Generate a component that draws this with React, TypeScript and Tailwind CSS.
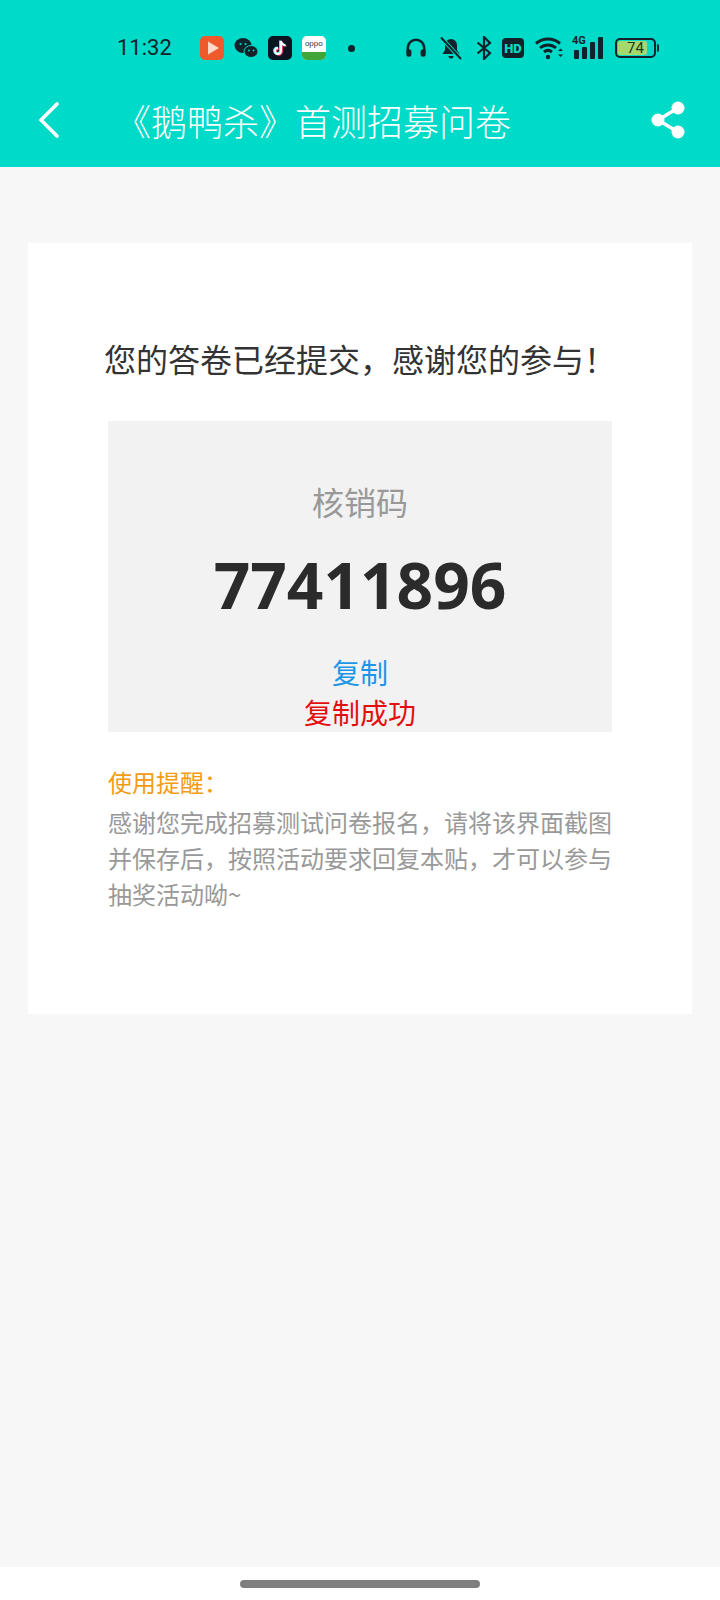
const cjk = "font-['Noto_Sans_CJK_SC','Noto_Sans',sans-serif]";

function AppIcons() {
  return (
    <div className="ml-[28px] flex items-center gap-[10px]">
      <svg width="24" height="24" viewBox="0 0 24 24">
        <rect width="24" height="24" rx="5" fill="#ef5a2c" />
        <path d="M8 5.500 19 12 8 18.500Z" fill="#ffd9c9" />
      </svg>
      <svg width="24" height="24" viewBox="0 0 24 24" fill="#10232b">
        <ellipse cx="9" cy="9.500" rx="8.500" ry="7.500" />
        <ellipse cx="17" cy="15.500" rx="7" ry="6" stroke="#00dac8" strokeWidth="1" />
        <circle cx="6.500" cy="8" r="1.100" fill="#00dac8" />
        <circle cx="11.500" cy="8" r="1.100" fill="#00dac8" />
        <circle cx="15" cy="14.500" r="0.900" fill="#00dac8" />
        <circle cx="19.500" cy="14.500" r="0.900" fill="#00dac8" />
      </svg>
      <svg width="24" height="24" viewBox="0 0 24 24">
        <rect width="24" height="24" rx="5" fill="#0b1420" />
        <path d="M13 5v10a3 3 0 1 1-3-3M13 5c.4 2.500 2 4 4.500 4.300" fill="none" stroke="#ee3f62" strokeWidth="2.400" transform="translate(.8 .6)" />
        <path d="M13 5v10a3 3 0 1 1-3-3M13 5c.4 2.500 2 4 4.500 4.300" fill="none" stroke="#4de8ee" strokeWidth="2.400" transform="translate(-.8 -.4)" />
        <path d="M13 5v10a3 3 0 1 1-3-3M13 5c.4 2.500 2 4 4.500 4.300" fill="none" stroke="#fff" strokeWidth="1.800" />
      </svg>
      <div className="flex h-[24px] w-[24px] flex-col overflow-hidden rounded-[5px] bg-white">
        <div className="flex flex-1 items-center justify-center">
          <span className="font-['Liberation_Sans',sans-serif] text-[8px] leading-none text-[#2a3a3a]">oppo</span>
        </div>
        <div className="h-[8px] bg-[#3fa53a]" />
      </div>
      <div className="ml-[12px] h-[7px] w-[7px] rounded-full bg-[#10232b]" />
    </div>
  );
}

function StatusIcons() {
  return (
    <div className="flex items-center">
      <svg width="22" height="24" viewBox="0 0 24 24" fill="none" stroke="#10232b" strokeWidth="2.800">
        <path d="M3 17v-5a9 9 0 0 1 18 0v5" />
        <rect x="2" y="14" width="4.500" height="7" rx="1.500" fill="#10232b" strokeWidth="1" />
        <rect x="17.500" y="14" width="4.500" height="7" rx="1.500" fill="#10232b" strokeWidth="1" />
      </svg>
      <svg className="ml-[12px]" width="24" height="24" viewBox="0 0 24 24">
        <path d="M12 3a6 6 0 0 1 6 6v5l2.500 4h-17L6 14V9a6 6 0 0 1 6-6ZM9.500 20h5a2.500 2.500 0 0 1-5 0Z" fill="#10232b" />
        <path d="M2 1.500 22 23" stroke="#00dac8" strokeWidth="4" />
        <path d="M2 1.500 22 23" stroke="#10232b" strokeWidth="2" />
      </svg>
      <svg className="ml-[13px]" width="16" height="24" viewBox="0 0 16 24" fill="none" stroke="#10232b" strokeWidth="2.200">
        <path d="M1.500 6.500 14 17l-6 6V1l6 6L1.500 17.500" />
      </svg>
      <div className="ml-[10px] flex h-[20px] w-[22px] items-center justify-center rounded-[4px] bg-[#10232b] font-['Roboto',sans-serif] text-[13px] leading-none font-black text-[#00dac8]">
        HD
      </div>
      <svg className="ml-[11px]" width="30" height="24" viewBox="0 0 30 24" fill="none" stroke="#10232b" strokeWidth="3">
        <path d="M1 7.500c7-6 17-6 24 0" />
        <path d="M5 12c4.500-4 11.500-4 16 0" />
        <path d="M9 16c2.500-2 5.500-2 8 0" />
        <circle cx="13" cy="21" r="2.200" fill="#10232b" stroke="none" />
        <path d="m23 15 2.500-2.500L28 15ZM23 18.500l2.500 2.500 2.500-2.500Z" fill="#10232b" stroke="none" />
      </svg>
      <div className="relative ml-[7px] h-[24px] w-[32px]">
        <span className="absolute top-[-1px] left-0 font-['Roboto',sans-serif] text-[11px] leading-none font-bold text-[#10232b]">4G</span>
        <svg className="absolute inset-0" width="32" height="24" viewBox="0 0 32 24" fill="#10232b">
          <rect x="2" y="14" width="5" height="9" rx="1" />
          <rect x="10" y="11" width="5" height="12" rx="1" />
          <rect x="18" y="6" width="5" height="17" rx="1" />
          <rect x="26" y="1" width="5" height="22" rx="1" />
        </svg>
      </div>
      <div className="ml-[11px] flex items-center">
        <div className="relative flex h-[20px] w-[41px] items-center overflow-hidden rounded-[5px] border-2 border-[#10232b] p-[1px]">
          <div className="h-full w-[29px] rounded-[2px] bg-[#a5d86f]" />
          <span className="absolute inset-0 flex items-center justify-center font-['Roboto',sans-serif] text-[15px] leading-none text-[#1d3a20]">74</span>
        </div>
        <div className="ml-[1px] h-[8px] w-[2px] rounded-r bg-[#10232b]" />
      </div>
    </div>
  );
}

export default function App() {
  return (
    <div className={`flex h-[1600px] w-[720px] flex-col overflow-hidden bg-[#f7f7f7] ${cjk}`}>
      <header className="h-[167px] shrink-0 bg-[#00dac8]">
        <div className="flex h-[62px] items-end pr-[61px] pl-[117px]">
          <span className="font-['Roboto',sans-serif] text-[22px] leading-[28px] text-[#10232b]">11:32</span>
          <div className="mb-[2px]">
            <AppIcons />
          </div>
          <div className="mb-[2px] ml-auto">
            <StatusIcons />
          </div>
        </div>
        <div className="mt-[33px] flex items-center pr-[34px] pl-[38px]">
          <svg className="shrink-0" width="22" height="36" viewBox="0 0 22 36" fill="none" stroke="white" strokeWidth="3.600" strokeLinecap="round" strokeLinejoin="round">
            <path d="M19 2 3 18l16 16" />
          </svg>
          <h1 className="ml-[55px] text-[36px] leading-[50px] font-light whitespace-nowrap text-white">
            《鹅鸭杀》首测招募问卷
          </h1>
          <svg className="ml-auto" width="36" height="38" viewBox="0 0 36 38" fill="white">
            <circle cx="28" cy="7" r="6.500" />
            <circle cx="8" cy="19" r="6.500" />
            <circle cx="28" cy="31" r="6.500" />
            <path d="M28 7 8 19l20 12" fill="none" stroke="white" strokeWidth="3.500" />
          </svg>
        </div>
      </header>

      <main className="px-[28px] pt-[76px]">
        <section className="h-[771px] bg-white px-[80px] pt-[92px]">
          <p className="ml-[-4px] text-[32px] leading-[46px] whitespace-nowrap text-[#333333]">
            {"您的答卷已经提交\uFF0C感谢您的参与\uFF01"}
          </p>
          <div className="mt-[40px] flex h-[311px] flex-col items-center bg-[#f2f2f2] pt-[57px]">
            <p className="text-[32px] leading-[46px] text-[#999999]">核销码</p>
            <p className="mt-[18px] font-['Open_Sans',sans-serif] text-[64px] leading-[86px] font-bold text-[#2b2b2b]">
              77411896
            </p>
            <p className="mt-[24px] text-[28px] leading-[40px] text-[#1c96e6]">复制</p>
            <p className="text-[28px] leading-[40px] whitespace-nowrap text-[#e30f0f]">复制成功</p>
          </div>
          <p className="mt-[32px] text-[24px] leading-[36px] text-[#f39c12]">{"使用提醒\uFF1A"}</p>
          <p className="mt-[4px] text-[24px] leading-[36px] text-[#999999]">
            {"感谢您完成招募测试问卷报名\uFF0C请将该界面截图并保存后\uFF0C按照活动要求回复本贴\uFF0C才可以参与抽奖活动呦~"}
          </p>
        </section>
      </main>

      <footer className="mt-auto flex h-[33px] items-center justify-center bg-white">
        <div className="h-[8px] w-[240px] rounded-full bg-[#7f7f7f]" />
      </footer>
    </div>
  );
}
